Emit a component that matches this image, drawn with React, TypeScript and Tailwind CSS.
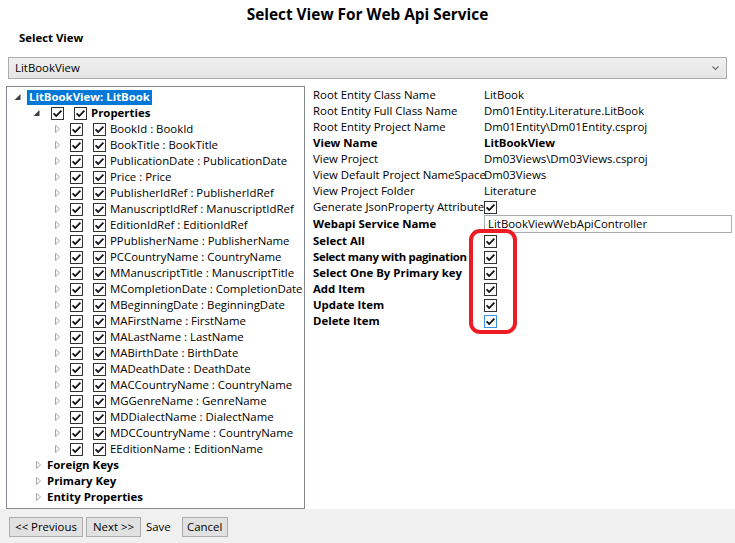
import React from "react";

function Check({ blue }: { blue?: boolean }) {
  return (
    <span
      className={
        blue
          ? "flex h-[13px] w-[13px] shrink-0 items-center justify-center border border-[#3d8ee6] bg-white"
          : "flex h-[13px] w-[13px] shrink-0 items-center justify-center border border-[#333333] bg-white"
      }
    >
      <svg width="11" height="11" viewBox="0 0 11 11">
        <path d="M1.6 5.4 L4.2 8 L9.4 2.6" fill="none" stroke="#111" strokeWidth="1.8" />
      </svg>
    </span>
  );
}

function Expanded() {
  return (
    <svg width="10" height="10" viewBox="0 0 10 10" className="shrink-0">
      <polygon points="7.5,2 7.5,8 1.5,8" fill="#404040" />
    </svg>
  );
}

function Collapsed() {
  return (
    <svg width="10" height="10" viewBox="0 0 10 10" className="shrink-0">
      <path d="M3.5 1.5 L7.5 5 L3.5 8.5 Z" fill="#fff" stroke="#a6a6a6" strokeWidth="1" />
    </svg>
  );
}

const children: string[] = [
  "BookId : BookId",
  "BookTitle : BookTitle",
  "PublicationDate : PublicationDate",
  "Price : Price",
  "PublisherIdRef : PublisherIdRef",
  "ManuscriptIdRef : ManuscriptIdRef",
  "EditionIdRef : EditionIdRef",
  "PPublisherName : PublisherName",
  "PCCountryName : CountryName",
  "MManuscriptTitle : ManuscriptTitle",
  "MCompletionDate : CompletionDate",
  "MBeginningDate : BeginningDate",
  "MAFirstName : FirstName",
  "MALastName : LastName",
  "MABirthDate : BirthDate",
  "MADeathDate : DeathDate",
  "MACCountryName : CountryName",
  "MGGenreName : GenreName",
  "MDDialectName : DialectName",
  "MDCCountryName : CountryName",
  "EEditionName : EditionName",
];

type Info = { label: string; value?: string; bold?: boolean; check?: boolean; blue?: boolean; tight?: boolean };

const infoRows: Info[] = [
  { label: "Root Entity Class Name", value: "LitBook" },
  { label: "Root Entity Full Class Name", value: "Dm01Entity.Literature.LitBook" },
  { label: "Root Entity Project Name", value: "Dm01Entity\\Dm01Entity.csproj" },
  { label: "View Name", value: "LitBookView", bold: true },
  { label: "View Project", value: "Dm03Views\\Dm03Views.csproj" },
  { label: "View Default Project NameSpace", value: "Dm03Views" },
  { label: "View Project Folder", value: "Literature" },
  { label: "Generate JsonProperty Attribute", check: true },
];

const opRows: Info[] = [
  { label: "Select All", bold: true, check: true },
  { label: "Select many with pagination", bold: true, check: true, tight: true },
  { label: "Select One By Primary key", bold: true, check: true },
  { label: "Add Item", bold: true, check: true },
  { label: "Update Item", bold: true, check: true },
  { label: "Delete Item", bold: true, check: true, blue: true },
];

function InfoRow({ r }: { r: Info }) {
  return (
    <div className="flex h-[16px] items-center">
      <div
        className={
          r.bold
            ? "w-[171px] shrink-0 whitespace-nowrap font-bold"
            : "w-[171px] shrink-0 whitespace-nowrap"
        }
      >
        {r.label}
      </div>
      {r.check ? (
        <Check blue={r.blue} />
      ) : (
        <div className={r.bold ? "whitespace-nowrap font-bold" : "whitespace-nowrap"}>{r.value}</div>
      )}
    </div>
  );
}

function OpRow({ r }: { r: Info }) {
  return (
    <div className="flex h-[16px] items-center">
      <div
        className={
          r.tight
            ? "w-[157px] shrink-0 whitespace-nowrap font-bold tracking-[-0.3px]"
            : "w-[157px] shrink-0 whitespace-nowrap font-bold"
        }
      >
        {r.label}
      </div>
      <div className="ml-[14px]">
        <Check blue={r.blue} />
      </div>
    </div>
  );
}

export default function App() {
  return (
    <div className="relative flex h-[543px] w-[735px] flex-col overflow-hidden bg-white font-['Open_Sans',sans-serif] text-[11.4px] leading-[16px] text-black">
      <div className="h-[30px] text-center text-[15.4px] font-bold leading-[30px]">
        Select View For Web Api Service
      </div>
      <div className="h-[16px] pl-[19px] font-bold">Select View</div>
      <div className="mx-[8px] mt-[11px] flex h-[22px] items-center justify-between border border-[#acacac] bg-gradient-to-b from-[#f0f0f0] to-[#e5e5e5] pl-[6px] pr-[6px]">
        <span>LitBookView</span>
        <svg width="9" height="6" viewBox="0 0 9 6">
          <path d="M1.5 1.5 L4.5 4.5 L7.5 1.5" fill="none" stroke="#707070" strokeWidth="1.2" />
        </svg>
      </div>
      <div className="mt-[7px] flex h-[423px]">
        <div className="ml-[6px] h-[423px] w-[299px] shrink-0 border border-[#828790] bg-white pt-[2px]">
          <div className="flex h-[16px] items-center">
            <div className="w-[6px] shrink-0" />
            <Expanded />
            <div className="ml-[4px] flex h-[15px] items-center bg-[#0078d7] px-[2px] font-bold text-white">
              LitBookView: LitBook
            </div>
          </div>
          <div className="flex h-[16px] items-center">
            <div className="w-[25px] shrink-0" />
            <Expanded />
            <div className="ml-[9px]"><Check /></div>
            <div className="ml-[10px]"><Check /></div>
            <span className="ml-[4px] font-bold">Properties</span>
          </div>
          {children.map((c) => (
            <div key={c} className="flex h-[16px] items-center">
              <div className="w-[45px] shrink-0" />
              <Collapsed />
              <div className="ml-[8px]"><Check /></div>
              <div className="ml-[10px]"><Check /></div>
              <span className="ml-[4px] whitespace-nowrap">{c}</span>
            </div>
          ))}
          {["Foreign Keys", "Primary Key", "Entity Properties"].map((t) => (
            <div key={t} className="flex h-[16px] items-center">
              <div className="w-[26px] shrink-0" />
              <Collapsed />
              <span className="ml-[4px] font-bold">{t}</span>
            </div>
          ))}
        </div>
        <div className="ml-[8px] flex flex-col pt-[1px]">
          {infoRows.map((r) => (
            <InfoRow key={r.label} r={r} />
          ))}
          <div className="flex h-[18px] items-center">
            <div className="w-[171px] shrink-0 font-bold">Webapi Service Name</div>
            <div className="flex h-[18px] w-[248px] items-center border border-[#abadb3] bg-white pl-[3px]">
              LitBookViewWebApiController
            </div>
          </div>
          {opRows.map((r) => (
            <OpRow key={r.label} r={r} />
          ))}
        </div>
      </div>
      <div className="flex h-[34px] items-start bg-[#f0f0f0] pt-[8px]">
        <button className="ml-[9px] h-[20px] w-[74px] border border-[#adadad] bg-[#e1e1e1] leading-[18px]">
          &lt;&lt; Previous
        </button>
        <button className="ml-[3px] h-[20px] w-[55px] border border-[#adadad] bg-[#e1e1e1] leading-[18px]">
          Next &gt;&gt;
        </button>
        <span className="ml-[5px] leading-[20px]">Save</span>
        <button className="ml-[11px] h-[20px] w-[46px] border border-[#adadad] bg-[#e1e1e1] leading-[18px]">
          Cancel
        </button>
      </div>
      <div className="pointer-events-none absolute left-[469px] top-[229px] h-[105px] w-[48px] rounded-[11px] border-[4px] border-[#ec1c24]" />
    </div>
  );
}
